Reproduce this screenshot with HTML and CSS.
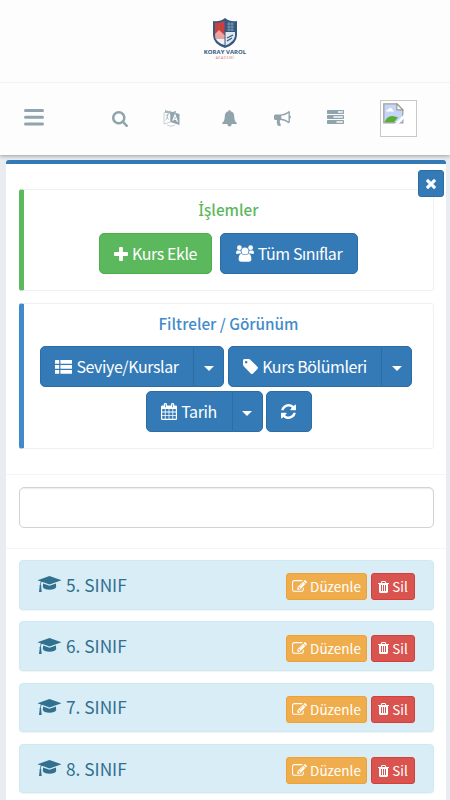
FILE: index.html
```
<!DOCTYPE html>
<html lang="tr">
<head>
  <meta charset="UTF-8">
  <title>Koray Varol Akademi</title>
  <meta name="viewport" content="width=device-width, initial-scale=1.0">
  <link rel="stylesheet" href="styles.css">
</head>
<body>
<svg class="defs" width="0" height="0">
  <symbol id="cap" viewBox="0 0 24 17"><path d="M12 0 24 4.2 12 8.4 4.5 5.8Q3.2 6.8 3.2 8.8q.9.5.4 1.5L4.2 16H1.5l.7-5.7q-.6-1 .3-1.6.1-2.2 1-3.3L0 4.2z"/><path d="M5.6 7.5 12 9.8l6.4-2.3.3 3.6Q17.500 13.800 12 13.800 6.500 13.800 5.300 11.100z"/></symbol>
  <symbol id="edit" viewBox="0 0 1792 1792"><path d="M888 1184l116-116-152-152-116 116v56h96v96h56zm440-720q-16-16-33 1l-350 350q-17 17-1 33t33-1l350-350q17-17 1-33zm80 594v190q0 119-84.500 203.500t-203.500 84.500h-832q-119 0-203.500-84.500t-84.500-203.500v-832q0-119 84.500-203.500t203.500-84.500h832q63 0 117 25 15 7 18 23 3 17-9 29l-49 49q-14 14-32 8-23-6-45-6h-832q-66 0-113 47t-47 113v832q0 66 47 113t113 47h832q66 0 113-47t47-113v-126q0-13 9-22l64-64q15-15 35-7t20 29zm-96-738l288 288-672 672h-288v-288zm444 132l-92 92-288-288 92-92q28-28 68-28t68 28l152 152q28 28 28 68t-28 68z"/></symbol>
  <symbol id="trash" viewBox="192 128 1408 1536"><path d="M704 1376v-704q0-14-9-23t-23-9h-64q-14 0-23 9t-9 23v704q0 14 9 23t23 9h64q14 0 23-9t9-23zm256 0v-704q0-14-9-23t-23-9h-64q-14 0-23 9t-9 23v704q0 14 9 23t23 9h64q14 0 23-9t9-23zm256 0v-704q0-14-9-23t-23-9h-64q-14 0-23 9t-9 23v704q0 14 9 23t23 9h64q14 0 23-9t9-23zm-544-992h448l-48-117q-7-9-17-11h-317q-10 2-17 11zm928 32v64q0 14-9 23t-23 9h-96v948q0 83-47 143.500t-113 60.500h-832q-66 0-113-58.500t-47-141.500v-952h-96q-14 0-23-9t-9-23v-64q0-14 9-23t23-9h309l70-167q15-37 54-63t79-26h320q40 0 79 26t54 63l70 167h309q14 0 23 9t9 23z"/></symbol>
</svg>

<header class="brand">
  <svg class="brand-shield" width="26" height="30" viewBox="0 0 26 30">
    <path d="M1 3Q8 4 13 0q5 4 12 3v14q0 9-12 13Q1 26 1 17z" fill="#34587f"/>
    <path d="M3 5q5 0 9.500-2v17H3z" fill="#c9413f"/>
    <path d="M3 16l4-4 5.500 5v4H3.500z" fill="#e9a5a2"/>
    <path d="M13.500 14h9.500v4q-1 6-9.500 9.500z" fill="#dfe7ef"/>
    <path d="M15 6h7M15 9h7M15 12h7M17 4v9M20 4v9" stroke="#8ba3bd" stroke-width=".8"/>
    <path d="M4 21h8.500v6Q6 25 4 21z" fill="#eef1f5"/>
    <path d="M15 20l6-3M15 23l5-3" stroke="#34587f" stroke-width="1.200"/>
  </svg>
  <span class="brand-name">KORAY VAROL</span>
  <span class="brand-sub">AKADEMİ</span>
</header>

<nav class="navbar">
  <svg class="nav-menu" width="20" height="17" viewBox="0 0 20 17"><path d="M1.500 1.600h17M1.500 8.300h17M1.500 15h17" stroke="#90a4ae" stroke-width="3" stroke-linecap="round"/></svg>
  <svg class="nav-search" width="16" height="16" viewBox="64 128 1664 1664"><path d="M1216 832q0-185-131.500-316.500t-316.500-131.500-316.500 131.500-131.500 316.500 131.500 316.500 316.500 131.500 316.500-131.500 131.500-316.500zm512 832q0 52-38 90t-90 38q-54 0-90-38l-343-342q-179 124-399 124-143 0-273.500-55.500t-225-150-150-225-55.500-273.500 55.500-273.500 150-225 225-150 273.500-55.500 273.500 55.500 225 150 150 225 55.500 273.500q0 220-124 399l343 343q37 37 37 90z"/></svg>
  <svg class="nav-lang" width="17" height="18" viewBox="0 0 17 18">
    <path d="M1 3.800 7.500 2v11L1 15z" fill="#fff" stroke="#b5c3c9" stroke-width=".8"/>
    <path d="M2 1l7 2.200 4-1.500v2L7.500 5 2 3.500z" fill="#a3b4bc"/>
    <path d="M7.500 2.500 16.500 5v11L7.500 13z"/>
    <path d="M9.700 11.700 12 5.800l2.500 7.200M10.500 9.800l3.200.9" fill="none" stroke="#fff" stroke-width="1.100"/>
    <path d="M2.500 6.500l3.500-1M4.500 5q1 4-2 6.500M3 8l3 2.500" fill="none" stroke="#a3b4bc" stroke-width=".8"/>
    <path d="M4 16q4 2.500 8 0" fill="none" stroke="#b5c3c9" stroke-width=".8"/>
  </svg>
  <svg class="nav-bell" width="15" height="17" viewBox="0 0 15 17"><path d="M7.500 0q1 0 1 1.200Q12 2 12.200 6q.1 5.500 2.800 7 0 1-1 1H9.700q-.2 2.600-2.200 2.600T5.300 14H1q-1 0-1-1 2.700-1.500 2.800-7Q3 2 6.500 1.200 6.500 0 7.500 0z"/></svg>
  <svg class="nav-horn" width="17" height="15" viewBox="0 0 17 15"><path fill-rule="evenodd" d="M14.800 0q1.100.1 1.100 1.200v3.600q1.100.2 1.100 1.300t-1.100 1.300V11q0 1.100-1.200 1.200Q11 9 6.500 8.900q-1.100.5-.5 1.700-.7 1 .5 2-.3 1 .8 1.700-1.500 1.200-3.700.2-1.200-2.900-.6-5.600H1.300Q0 8.800 0 7.500V4.800Q0 3.500 1.300 3.400h4.300Q10.800 3.300 14.800 0zM14.500 1.900Q11.500 4.300 7.300 4.700v2.900q4.200.4 7.200 2.800z"/></svg>
  <svg class="nav-tasks" width="17" height="14" viewBox="0 0 17 14"><path fill-rule="evenodd" d="M.7 0h15.600q.7 0 .7.700v2.500q0 .7-.7.700H.7Q0 3.900 0 3.200V.7Q0 0 .7 0zM11 1.200v1.500h4.800V1.200zM.7 5h15.600q.7 0 .7.700v2.500q0 .7-.7.700H.7Q0 8.900 0 8.200V5.700Q0 5 .7 5zM6.500 6.200v1.500h9.300V6.200zM.7 10h15.600q.7 0 .7.700v2.500q0 .7-.7.700H.7q-.7 0-.7-.7v-2.500Q0 10 .7 10zM9.500 11.200v1.500h6.300v-1.500z"/></svg>
  <div class="avatar">
    <svg width="21" height="21" viewBox="0 0 21 21">
      <path d="M.8.800h13l6 6v13H.8z" fill="#c4d5f5" stroke="#a0a0a0" stroke-width="1.300"/>
      <path d="M3 8.500q0-2 2-2 .7-2 2.700-1.500 2 .5 1.800 2 1.500.2 1.500 1.500z" fill="#fff"/>
      <path d="M1.500 19.200Q4 13 9 13q3 0 6 1.500L11 19.200z" fill="#58ad34"/>
      <path d="M13.800.800v6h6z" fill="#fff" stroke="#999" stroke-width="1.200"/>
      <path d="M21 11.500 11.500 21h4L21 15.500z" fill="#fff"/>
    </svg>
  </div>
</nav>

<main class="panel">
  <button class="btn close" type="button"><svg width="10" height="10" viewBox="302 366 1188 1188"><path d="M1490 1322q0 40-28 68l-136 136q-28 28-68 28t-68-28l-294-294-294 294q-28 28-68 28t-68-28l-136-136q-28-28-28-68t28-68l294-294-294-294q-28-28-28-68t28-68l136-136q28-28 68-28t68 28l294 294 294-294q28-28 68-28t68 28l136 136q28 28 28 68t-28 68l-294 294 294 294q28 28 28 68z"/></svg></button>

  <section class="callout callout-success">
    <h4><span class="dotted">İ</span>şlemler</h4>
    <div class="row row-wide">
      <button class="btn btn-success btn-add" type="button"><svg width="14" height="14" viewBox="192 128 1408 1408"><path d="M1600 736v192q0 40-28 68t-68 28h-416v416q0 40-28 68t-68 28h-192q-40 0-68-28t-28-68v-416h-416q-40 0-68-28t-28-68v-192q0-40 28-68t68-28h416v-416q0-40 28-68t68-28h192q40 0 68 28t28 68v416h416q40 0 68 28t28 68z"/></svg><span>Kurs Ekle</span></button>
      <button class="btn btn-all" type="button"><svg width="18" height="17" viewBox="0 0 18 17"><circle cx="3.400" cy="2.700" r="2.400"/><circle cx="14.600" cy="2.700" r="2.400"/><path d="M1 5.500h3.500q.2 2 1.200 3H3.500Q0 9.500 0 8q0-2 1-2.500zM17 5.500h-3.500q-.2 2-1.200 3h2.200Q18 9.500 18 8q0-2-1-2.500z"/><circle cx="9" cy="6" r="3.500"/><path d="M5.300 8.700Q9 11.500 12.700 8.700q2.700.8 2.700 5.300 0 2.800-2.600 2.800H5.200Q2.600 16.800 2.600 14q0-4.500 2.700-5.300z"/></svg><span>Tüm Sınıflar</span></button>
    </div>
  </section>

  <section class="callout callout-primary">
    <h4>Filtreler / Görünüm</h4>
    <div class="row row-groups">
      <div class="btn-group">
        <button class="btn btn-level" type="button"><svg width="17" height="14" viewBox="0 0 17 14"><path d="M.6 0h3.600v3.800H0V.6zM5.400 0H17v3.800H5.400zM0 5h4.200v3.800H0zM5.400 5H17v3.800H5.400zM0 10h4.200v3.800H0zM5.400 10H17v3.800H5.400z"/></svg><span>Seviye/Kurslar</span></button>
        <button class="btn toggle" type="button"><i class="caret"></i></button>
      </div>
      <div class="btn-group">
        <button class="btn btn-parts" type="button"><svg width="15" height="15" viewBox="128 128 1515 1515"><path d="M576 448q0-53-37.500-90.500t-90.500-37.500-90.500 37.500-37.500 90.500 37.500 90.500 90.500 37.500 90.500-37.500 37.500-90.500zm1067 576q0 53-37 90l-491 492q-39 37-91 37-53 0-90-37l-715-716q-38-37-64.500-101t-26.500-117v-416q0-52 38-90t90-38h416q53 0 117 26.500t102 64.500l715 714q37 39 37 91z"/></svg><span>Kurs Bölümleri</span></button>
        <button class="btn toggle" type="button"><i class="caret"></i></button>
      </div>
    </div>
    <div class="row">
      <div class="btn-group">
        <button class="btn btn-date" type="button"><svg width="16" height="17" viewBox="0 0 16 17"><path fill-rule="evenodd" d="M1.200 2.400h1.600V1.200Q2.800 0 4.400 0T6 1.200v1.200h4V1.200Q10 0 11.600 0t1.600 1.200v1.200h1.600q1.200 0 1.200 1.200v12.200q0 1.200-1.200 1.200H1.200Q0 17 0 15.800V3.600q0-1.200 1.200-1.200zM1.200 6v2.600h2.600V6zM4.600 6v2.600h3V6zM8.400 6v2.600h3V6zM12.200 6v2.600h2.600V6zM1.200 9.400v2.800h2.600V9.400zM4.600 9.400v2.800h3V9.400zM8.400 9.400v2.800h3V9.400zM12.200 9.400v2.800h2.600V9.400zM1.200 13v2.800h2.600V13zM4.600 13v2.800h3V13zM8.400 13v2.800h3V13zM12.200 13v2.800h2.600V13zM4.100 1.200v3h.7v-3zM11.200 1.200v3h.7v-3z"/></svg><span>Tarih</span></button>
        <button class="btn toggle" type="button"><i class="caret"></i></button>
      </div>
      <button class="btn btn-refresh" type="button"><svg width="15" height="15" viewBox="128 128 1536 1536"><path d="M1639 1056q0 5-1 7-64 268-268 434.500t-478 166.500q-146 0-282.500-55t-243.500-157l-129 129q-19 19-45 19t-45-19-19-45v-448q0-26 19-45t45-19h448q26 0 45 19t19 45-19 45l-137 137q71 66 161 102t187 36q134 0 250-65t186-179q11-17 53-117 8-23 30-23h192q13 0 22.500 9.500t9.500 22.500zm25-800v448q0 26-19 45t-45 19h-448q-26 0-45-19t-19-45 19-45l138-138q-148-137-349-137-134 0-250 65t-186 179q-11 17-53 117-8 23-30 23h-199q-13 0-22.500-9.500t-9.500-22.500v-7q65-268 270-434.500t480-166.500q146 0 284 55.500t245 156.500l130-129q19-19 45-19t45 19 19 45z"/></svg></button>
    </div>
  </section>

  <div class="search">
    <input type="text">
  </div>

  <div class="list">
    <div class="item">
      <svg width="25" height="17"><use href="#cap"/></svg><span class="item-name">5. SINIF</span>
      <button class="btn btn-sm btn-warning" type="button"><svg width="15" height="15"><use href="#edit"/></svg><span>Düzenle</span></button>
      <button class="btn btn-sm btn-danger" type="button"><svg width="11" height="12"><use href="#trash"/></svg><span>Sil</span></button>
    </div>
    <div class="item">
      <svg width="25" height="17"><use href="#cap"/></svg><span class="item-name">6. SINIF</span>
      <button class="btn btn-sm btn-warning" type="button"><svg width="15" height="15"><use href="#edit"/></svg><span>Düzenle</span></button>
      <button class="btn btn-sm btn-danger" type="button"><svg width="11" height="12"><use href="#trash"/></svg><span>Sil</span></button>
    </div>
    <div class="item">
      <svg width="25" height="17"><use href="#cap"/></svg><span class="item-name">7. SINIF</span>
      <button class="btn btn-sm btn-warning" type="button"><svg width="15" height="15"><use href="#edit"/></svg><span>Düzenle</span></button>
      <button class="btn btn-sm btn-danger" type="button"><svg width="11" height="12"><use href="#trash"/></svg><span>Sil</span></button>
    </div>
    <div class="item">
      <svg width="25" height="17"><use href="#cap"/></svg><span class="item-name">8. SINIF</span>
      <button class="btn btn-sm btn-warning" type="button"><svg width="15" height="15"><use href="#edit"/></svg><span>Düzenle</span></button>
      <button class="btn btn-sm btn-danger" type="button"><svg width="11" height="12"><use href="#trash"/></svg><span>Sil</span></button>
    </div>
  </div>
</main>
</body>
</html>
```

FILE: styles.css
```
* { box-sizing: border-box; }
body {
  margin: 0;
  background: #e9edf2;
  font-family: "Noto Sans CJK SC", "Noto Sans", sans-serif;
}
.defs {
  position: absolute;
}
.brand {
  position: relative;
  z-index: 1;
  height: 83px;
  padding-top: 18px;
  display: flex;
  flex-direction: column;
  align-items: center;
  background: #fdfdfd;
  border-bottom: 1px solid #f3f3f3;
}
.brand-name {
  margin-top: 1px;
  font: bold 6px/7px "Open Sans", sans-serif;
  color: #34587f;
}
.brand-sub {
  font: 3.500px/4px "Open Sans", sans-serif;
  letter-spacing: 0.500px;
  color: #d07a78;
}
.navbar {
  position: relative;
  height: 72px;
  padding: 0 33px 0 24px;
  display: flex;
  align-items: center;
  background: #fdfdfd;
  box-shadow: 0 1px 4px rgba(0,0,0,0.35);
  fill: #90a4ae;
}
.nav-menu { margin-top: -3px; }
.nav-search { margin-left: 68px; margin-top: -1px; }
.nav-lang { margin-left: 35px; margin-top: -2px; }
.nav-bell { margin-left: 42px; margin-top: -2px; }
.nav-horn { margin-left: 37px; margin-top: -2px; }
.nav-tasks { margin-left: 36px; margin-top: -4px; }
.avatar {
  width: 37px;
  height: 37px;
  margin-top: -1px;
  margin-left: auto;
  padding: 2px;
  background: #fff;
  border: 1px solid #c8c8c8;
}
.panel {
  position: relative;
  height: 640px;
  margin: 5px 4px 0 6px;
  padding-top: 25px;
  background: #fff;
  border-top: 4px solid #337ab7;
  border-radius: 3px 3px 0 0;
}
.btn {
  display: flex;
  align-items: center;
  justify-content: center;
  gap: 4px;
  height: 41px;
  padding: 0;
  border: 1px solid #2e6da4;
  border-radius: 5px;
  background: #337ab7;
  color: #fff;
  fill: #fff;
  font-family: inherit;
  font-size: 16px;
  letter-spacing: -0.400px;
  line-height: 20px;
  white-space: nowrap;
}
.btn span {
  margin-top: -2px;
}
.close {
  position: absolute;
  top: 6px;
  right: 2px;
  width: 26px;
  height: 27px;
  border-radius: 3px;
}
.callout {
  margin: 0 12px 12px 13px;
  padding-top: 8px;
  border: 1px solid #f0f0f0;
  border-left: 5px solid #428bca;
  border-radius: 3px;
}
.callout h4 {
  margin: 0;
  font-size: 15.300px;
  line-height: 22px;
  font-weight: 500;
  text-align: center;
}
.dotted {
  font-family: "Noto Sans", sans-serif;
}
.callout-success {
  height: 102px;
  border-left-color: #5cb85c;
}
.callout-success h4 { color: #5cb85c; }
.callout-primary { height: 146px; }
.callout-primary h4 { color: #428bca; }
.row {
  display: flex;
  justify-content: center;
  gap: 3px;
  margin-top: 4px;
}
h4 + .row { margin-top: 12px; }
.row-wide { gap: 8px; }
/* optical offset of the two wide filters */
.row-groups {
  gap: 4px;
  padding-right: 5px;
}
.btn-success {
  background: #5cb85c;
  border-color: #4cae4c;
}
.btn-add { width: 113px; }
.btn-all { width: 138px; }
.btn-group { display: flex; }
.btn-group .btn:first-child { border-radius: 5px 0 0 5px; }
.toggle {
  width: 31px;
  margin-left: -1px;
  border-radius: 0 5px 5px 0;
}
.btn-level, .btn-parts { width: 154px; }
.btn-date { width: 87px; }
.btn-refresh { width: 46px; }
.caret {
  margin-top: 4px;
  border-top: 5px solid #fff;
  border-left: 5px solid transparent;
  border-right: 5px solid transparent;
}
.search {
  height: 75px;
  margin-top: 25px;
  padding: 12px 12px 0 13px;
  border-top: 1px solid #f4f4f4;
  border-bottom: 1px solid #f4f4f4;
}
.search input {
  display: block;
  width: 100%;
  height: 41px;
  border: 1px solid #d2d2d2;
  border-radius: 5px;
  box-shadow: inset 0 1px 1px rgba(0,0,0,0.075);
}
.list {
  display: flex;
  flex-direction: column;
  gap: 11.700px;
  padding: 11px 12px 0 13px;
}
.item {
  height: 49.600px;
  padding: 4px 18px 0 18px;
  display: flex;
  align-items: center;
  gap: 4px;
  background: #d9edf7;
  border: 1px solid #cdeaf2;
  border-radius: 4px;
  box-shadow: 0 1px 1px rgba(0,0,0,0.05);
  color: #31708f;
  fill: #31708f;
}
.item > svg {
  margin-top: -4px;
  margin-left: -1px;
}
.item-name {
  margin-top: -5px;
  margin-right: auto;
  font-size: 17.300px;
}
.btn-sm {
  height: 27px;
  gap: 3px;
  border-radius: 3px;
  font-size: 13.500px;
  letter-spacing: 0;
}
.btn-sm span { margin-top: -1px; }
.btn-warning {
  width: 81px;
  background: #f0ad4e;
  border-color: #eea236;
}
.btn-danger {
  width: 44px;
  background: #d9534f;
  border-color: #d43f3a;
}
```
